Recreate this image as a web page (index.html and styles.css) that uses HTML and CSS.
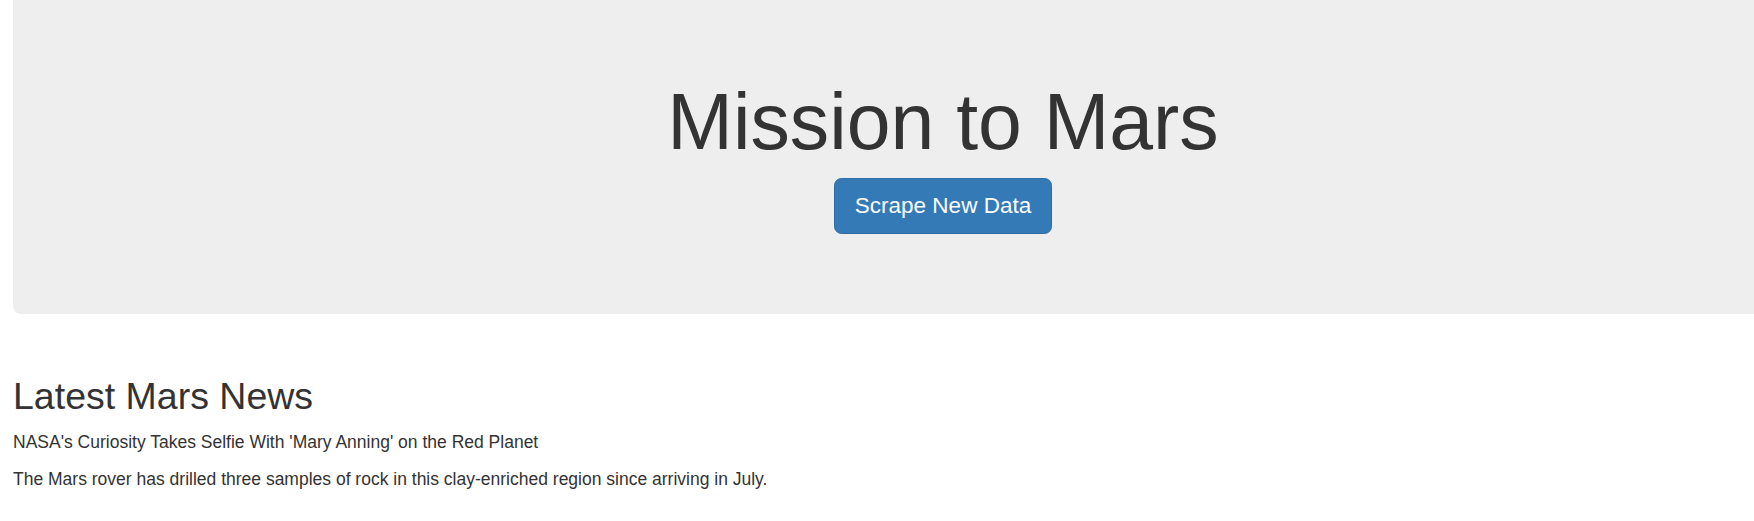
FILE: index.html
```html
<!DOCTYPE html>
<html lang="en">
<head>
<meta charset="utf-8">
<title>Mission to Mars</title>
<link rel="stylesheet" href="styles.css">
</head>
<body>
<div class="page">
  <div class="jumbotron">
    <h1 class="title">Mission to Mars</h1>
    <p class="actions"><a class="btn" href="#">Scrape New Data</a></p>
  </div>
  <section class="news">
    <h2 class="news-heading">Latest Mars News</h2>
    <p class="news-text">NASA's Curiosity Takes Selfie With 'Mary Anning' on the Red Planet</p>
    <p class="news-text">The Mars rover has drilled three samples of rock in this clay-enriched region since arriving in July.</p>
  </section>
</div>
</body>
</html>
```

FILE: styles.css
```css
html, body {
  margin: 0;
  padding: 0;
  overflow: hidden;
  background: #fff;
}
body {
  font-family: "Liberation Sans", Arial, Helvetica, sans-serif;
  font-size: 17.5px;
  line-height: 25px;
  color: #333;
}
.page {
  padding-left: 13px;
}
.jumbotron {
  box-sizing: border-box;
  background: #eee;
  border-radius: 0 0 0 7.5px;
  padding: 79px 0 80px 119px;
  text-align: center;
}
.title {
  margin: 0;
  font-size: 78.75px;
  line-height: 87px;
  font-weight: 500;
  color: #333;
}
.actions {
  margin: 12px 0 0;
  line-height: 0;
}
.btn {
  display: inline-block;
  font-size: 22.5px;
  line-height: 30px;
  padding: 12px 20px;
  color: #fff;
  background: #337ab7;
  border: 1px solid #2e6da4;
  border-radius: 7.5px;
  text-decoration: none;
  vertical-align: top;
}
.news {
  padding-top: 62px;
}
.news-heading {
  margin: 0 0 12.5px;
  font-size: 37.5px;
  line-height: 41px;
  font-weight: 500;
  color: #333;
}
.news-text {
  margin: 0 0 12px;
}
```
